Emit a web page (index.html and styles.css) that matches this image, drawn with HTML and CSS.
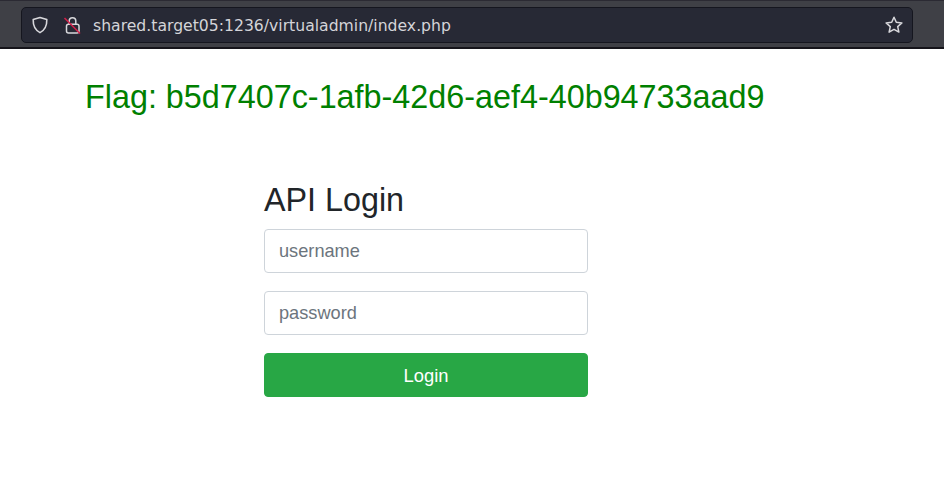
FILE: index.html
```html
<!DOCTYPE html>
<html lang="en">
<head>
	<meta charset="UTF-8">
	<title>API Login</title>
	<link rel="stylesheet" href="styles.css">
</head>
<body>
<div class="toolbar">
	<div class="urlbar">
		<svg class="icon" width="20" height="20" viewBox="0 0 20 20">
			<path d="M10 2.5 L16.8 4.6 C17 10.5 15 15 10 17.6 C5 15 3 10.5 3.2 4.6 Z" fill="none" stroke="#d8d8dc" stroke-width="1.6" stroke-linejoin="round"/>
		</svg>
		<svg class="icon lock" width="20" height="20" viewBox="0 0 20 20">
			<path d="M8.2 9 V6 C8.2 1.6 14.8 1.6 14.8 6 V9" fill="none" stroke="#d8d8dc" stroke-width="1.5"/>
			<rect x="5.5" y="9.3" width="12.5" height="8.7" rx="2" fill="none" stroke="#d8d8dc" stroke-width="1.5"/>
			<path d="M3.5 3 L19 18.5" stroke="#d0204a" stroke-width="1.6"/>
		</svg>
		<span class="url">shared.target05:1236/virtualadmin/index.php</span>
		<svg class="icon star" width="20" height="20" viewBox="0 0 20 20">
			<path d="M10 2.2 L12.3 7.3 L17.9 7.9 L13.7 11.6 L14.9 17.1 L10 14.3 L5.1 17.1 L6.3 11.6 L2.1 7.9 L7.7 7.3 Z" fill="none" stroke="#d8d8dc" stroke-width="1.5" stroke-linejoin="round"/>
		</svg>
	</div>
</div>
<div class="page">
	<h2 class="flag">Flag: b5d7407c-1afb-42d6-aef4-40b94733aad9</h2>
	<form class="login">
		<h3>API Login</h3>
		<input class="field" type="text" placeholder="username">
		<input class="field" type="password" placeholder="password">
		<button class="btn" type="button">Login</button>
	</form>
</div>
</body>
</html>
```

FILE: styles.css
```css
* {
	box-sizing: border-box;
	margin: 0;
	padding: 0;
}

body {
	background: #fff;
	font-family: "Liberation Sans", Arial, sans-serif;
	color: #212529;
}

.toolbar {
	height: 49px;
	padding: 6px 31px 5px 21px;
	background: #3f4046;
	border-top: 1px solid #2b2a33;
	border-bottom: 2px solid #15141a;
}

.urlbar {
	display: flex;
	align-items: center;
	height: 36px;
	padding: 0 8px 0 8px;
	background: #272935;
	border: 1px solid #15161f;
	border-radius: 5px;
}

.icon {
	flex: none;
}

.lock {
	margin-left: 11px;
}

.url {
	margin-left: 12px;
	flex: 1;
	font-family: "DejaVu Sans", sans-serif;
	font-size: 15.65px;
	color: #d4d4d8;
	white-space: nowrap;
}

.flag {
	padding: 29px 0 0 85px;
	font-size: 32.35px;
	line-height: 38px;
	font-weight: normal;
	color: #008000;
}

.login {
	display: flex;
	flex-direction: column;
	width: 324px;
	margin: 65px 0 0 264px;
}

.login h3 {
	font-size: 32.3px;
	line-height: 38px;
	font-weight: normal;
	margin-bottom: 10px;
}

.field {
	height: 44px;
	margin-bottom: 18px;
	padding: 0 14px;
	font-family: inherit;
	font-size: 18.2px;
	border: 1px solid #ced4da;
	border-radius: 4px;
	background: #fff;
}

.field::placeholder {
	color: #6c757d;
}

.btn {
	height: 44px;
	padding-top: 1px;
	font-family: inherit;
	font-size: 18.4px;
	color: #fff;
	background: #28a745;
	border: 1px solid #28a745;
	border-radius: 4px;
}
```
